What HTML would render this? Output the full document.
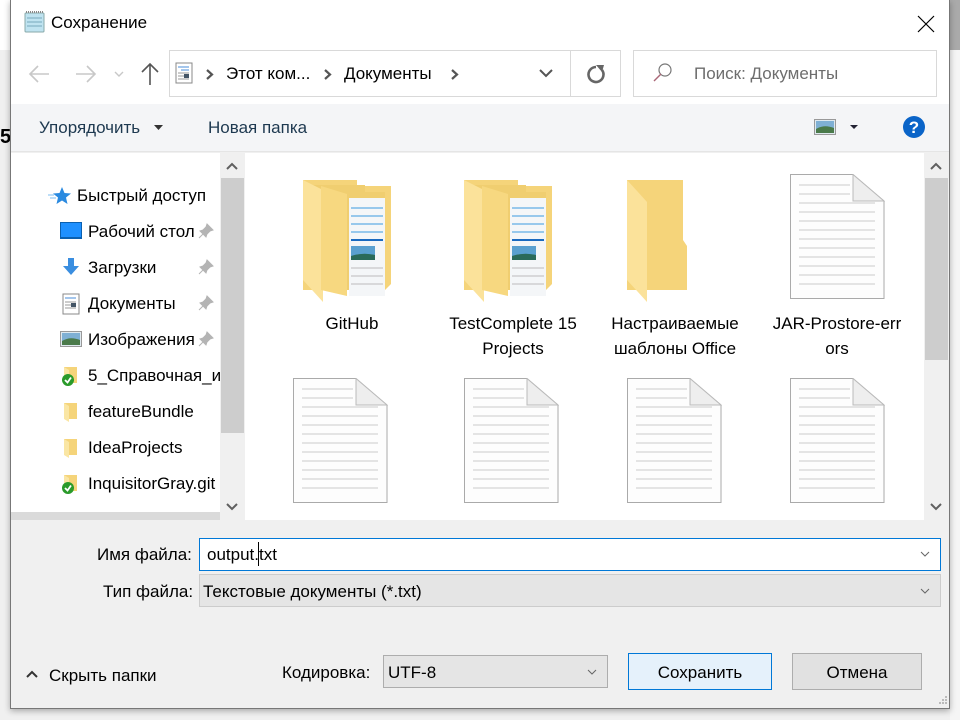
<!DOCTYPE html>
<html><head><meta charset="utf-8"><style>
*{margin:0;padding:0;box-sizing:border-box}
body{width:960px;height:720px;overflow:hidden;background:#f0f0f0;font-family:"Segoe UI","Liberation Sans","DejaVu Sans",sans-serif;font-size:17px;color:#000;position:relative}
.a{position:absolute}
.t{position:absolute;white-space:nowrap}
</style></head><body>
<div class="a" style="left:0;top:0;width:10px;height:720px;background:#f0f0f0"></div>
<div class="a" style="left:0;top:0;width:10px;height:50px;background:#fff"></div>
<div class="a" style="left:950px;top:0;width:10px;height:50px;background:#aaa"></div>
<div class="a" style="left:950px;top:50px;width:10px;height:670px;background:#f5f5f5"></div>
<div class="t" style="left:0;top:126px;font-size:20px;font-weight:bold">5</div>
<div class="a" style="left:10px;top:0;width:940px;height:709px;background:#f0f0f0;border:1px solid #777;border-top:none;box-shadow:0 2px 6px rgba(0,0,0,.3)"></div>
<div class="a" style="left:11px;top:0;width:938px;height:104px;background:#fff"></div>
<svg class="a" style="left:22px;top:10px" width="24" height="24" viewBox="0 0 24 24"><rect x="3" y="3" width="19" height="19" rx="1" fill="#bfe3f0" stroke="#8aa" /><g stroke="#7ab" stroke-width="1"><line x1="5" y1="8" x2="20" y2="8"/><line x1="5" y1="12" x2="20" y2="12"/><line x1="5" y1="16" x2="20" y2="16"/></g><line x1="4" y1="2" x2="21" y2="2" stroke="#888" stroke-width="2" stroke-dasharray="1 1"/></svg>
<div class="t" style="left:51px;top:13px;font-size:17px">Сохранение</div>
<svg class="a" style="left:916px;top:14px" width="20" height="20"><path d="M2 2L18 18M18 2L2 18" stroke="#000" stroke-width="1.2"/></svg>
<svg class="a" style="left:28px;top:64px" width="24" height="20"><path d="M2 10H21M10 2L2 10L10 18" stroke="#c8c8c8" stroke-width="1.6" fill="none"/></svg>
<svg class="a" style="left:74px;top:64px" width="24" height="20"><path d="M2 10H21M13 2L21 10L13 18" stroke="#c8c8c8" stroke-width="1.6" fill="none"/></svg>
<svg class="a" style="left:114px;top:70px" width="10" height="8"><path d="M1 2L5 6L9 2" stroke="#c8c8c8" stroke-width="1.4" fill="none"/></svg>
<svg class="a" style="left:140px;top:62px" width="20" height="24"><path d="M10 23V2M2 10L10 2L18 10" stroke="#555" stroke-width="1.6" fill="none"/></svg>
<div class="a" style="left:169px;top:50px;width:452px;height:47px;border:1px solid #d9d9d9;background:#fff"></div>
<div class="a" style="left:570px;top:51px;width:1px;height:45px;background:#d9d9d9"></div>
<svg class="a" style="left:175px;top:62px" width="18" height="22"><rect x="1" y="1" width="16" height="20" fill="#fff" stroke="#888"/><g stroke="#4a8ed8"><line x1="3" y1="5" x2="14" y2="5"/><line x1="6" y1="8" x2="14" y2="8"/></g><g stroke="#999"><line x1="3" y1="11" x2="14" y2="11"/><line x1="3" y1="14" x2="14" y2="14"/><line x1="3" y1="17" x2="14" y2="17"/></g><rect x="9" y="12" width="5" height="4" fill="#456"/></svg>
<svg class="a" style="left:206px;top:69px" width="8" height="11"><path d="M1 1L6 5.5L1 10" stroke="#555" stroke-width="2.2" fill="none"/></svg>
<div class="t" style="left:226px;top:64px">Этот ком...</div>
<svg class="a" style="left:324px;top:69px" width="8" height="11"><path d="M1 1L6 5.5L1 10" stroke="#555" stroke-width="2.2" fill="none"/></svg>
<div class="t" style="left:344px;top:64px">Документы</div>
<svg class="a" style="left:451px;top:69px" width="8" height="11"><path d="M1 1L6 5.5L1 10" stroke="#555" stroke-width="2.2" fill="none"/></svg>
<svg class="a" style="left:538px;top:68px" width="16" height="10"><path d="M2 2L8 8L14 2" stroke="#555" stroke-width="2" fill="none"/></svg>
<svg class="a" style="left:585px;top:63px" width="22" height="22"><g transform="translate(22,0) scale(-1,1)"><path d="M5 7A7.5 7.5 0 1 0 11 4" stroke="#666" stroke-width="2.6" fill="none"/><path d="M3 2L11 2L5 9Z" fill="#666"/></g></svg>
<div class="a" style="left:633px;top:50px;width:304px;height:47px;border:1px solid #d9d9d9;background:#fff"></div>
<svg class="a" style="left:652px;top:62px" width="22" height="22"><circle cx="13" cy="8" r="6" stroke="#777" stroke-width="1.2" fill="none"/><path d="M9 12L2 19" stroke="#a67" stroke-width="1.4"/></svg>
<div class="t" style="left:694px;top:64px;color:#6d6d6d">Поиск: Документы</div>
<div class="a" style="left:11px;top:104px;width:938px;height:48px;background:#f4f5f7;border-bottom:1px solid #e5e5e5"></div>
<div class="t" style="left:39px;top:118px;color:#1e3950">Упорядочить</div>
<svg class="a" style="left:154px;top:125px" width="10" height="6"><path d="M0 0H9L4.5 5Z" fill="#333"/></svg>
<div class="t" style="left:208px;top:118px;color:#1e3950">Новая папка</div>
<svg class="a" style="left:814px;top:119px" width="22" height="16"><rect x=".5" y=".5" width="21" height="15" fill="#dfe9ef" stroke="#999"/><rect x="2" y="2" width="18" height="12" fill="#7fb0d4"/><path d="M2 10Q10 5 20 9V14H2Z" fill="#4a7a4a"/></svg>
<svg class="a" style="left:850px;top:125px" width="9" height="5"><path d="M0 0H8L4 4Z" fill="#223"/></svg>
<svg class="a" style="left:902px;top:115px" width="24" height="24"><circle cx="12" cy="12" r="11" fill="#0a64c8"/><text x="12" y="18" text-anchor="middle" font-family="Liberation Sans" font-weight="bold" font-size="17" fill="#fff">?</text></svg>
<div class="a" style="left:11px;top:153px;width:209px;height:359px;background:#fff"></div>
<div class="a" style="left:11px;top:512px;width:209px;height:8px;background:#dadada"></div>
<div class="a" style="left:220px;top:153px;width:25px;height:367px;background:#f0f0f0"></div>
<div class="a" style="left:221px;top:178px;width:23px;height:255px;background:#cdcdcd"></div>
<svg class="a" style="left:225px;top:162px" width="14" height="9"><path d="M2 7L7 2L12 7" stroke="#606060" stroke-width="2" fill="none"/></svg>
<svg class="a" style="left:225px;top:502px" width="14" height="9"><path d="M2 2L7 7L12 2" stroke="#606060" stroke-width="2" fill="none"/></svg>
<div class="a" style="left:245px;top:153px;width:3px;height:367px;background:#fff"></div>
<svg class="a" style="left:48px;top:186px" width="24" height="20"><path d="M14 1L16.5 7L23 7.5L18 11.5L19.5 18L14 14.5L8.5 18L10 11.5L5 7.5L11.5 7Z" fill="#2a8ae0"/><g stroke="#7bbcf0"><line x1="0" y1="9" x2="6" y2="9"/><line x1="2" y1="12" x2="8" y2="12"/></g></svg>
<div class="t" style="left:77px;top:186px">Быстрый доступ</div>
<svg class="a" style="left:60px;top:222px" width="22" height="18"><rect x=".5" y=".5" width="21" height="16" fill="#1e90ff" stroke="#0a60b0"/><rect x="0" y="15" width="22" height="2" fill="#0a60b0"/></svg>
<div class="t" style="left:88px;top:222px;width:107px;overflow:hidden">Рабочий стол</div>
<svg class="a" style="left:62px;top:257px" width="18" height="20"><path d="M6 1H12V9H17L9 18L1 9H6Z" fill="#3a8ee0"/></svg>
<div class="t" style="left:88px;top:258px">Загрузки</div>
<svg class="a" style="left:62px;top:293px" width="18" height="22"><rect x="1" y="1" width="16" height="20" fill="#fff" stroke="#888"/><g stroke="#4a8ed8"><line x1="3" y1="5" x2="14" y2="5"/></g><g stroke="#999"><line x1="3" y1="9" x2="14" y2="9"/><line x1="3" y1="12" x2="14" y2="12"/><line x1="3" y1="15" x2="14" y2="15"/></g><rect x="9" y="10" width="5" height="4" fill="#456"/></svg>
<div class="t" style="left:88px;top:294px">Документы</div>
<svg class="a" style="left:60px;top:331px" width="22" height="16"><rect x=".5" y=".5" width="21" height="15" fill="#dfe9ef" stroke="#999"/><rect x="2" y="2" width="18" height="12" fill="#7fb0d4"/><path d="M2 10Q10 5 20 9V14H2Z" fill="#4a7a4a"/></svg>
<div class="t" style="left:88px;top:330px;width:107px;overflow:hidden">Изображения</div>
<svg class="a" style="left:198px;top:223px" width="16" height="16"><path d="M9 1L15 7L12 8L9 11L8 14L2 8L5 7L8 4Z M5 11L1 15" fill="#b4b4b4" stroke="#b4b4b4"/></svg>
<svg class="a" style="left:198px;top:259px" width="16" height="16"><path d="M9 1L15 7L12 8L9 11L8 14L2 8L5 7L8 4Z M5 11L1 15" fill="#b4b4b4" stroke="#b4b4b4"/></svg>
<svg class="a" style="left:198px;top:295px" width="16" height="16"><path d="M9 1L15 7L12 8L9 11L8 14L2 8L5 7L8 4Z M5 11L1 15" fill="#b4b4b4" stroke="#b4b4b4"/></svg>
<svg class="a" style="left:198px;top:331px" width="16" height="16"><path d="M9 1L15 7L12 8L9 11L8 14L2 8L5 7L8 4Z M5 11L1 15" fill="#b4b4b4" stroke="#b4b4b4"/></svg>
<svg class="a" style="left:60px;top:365px" width="20" height="22"><path d="M4 2H17V18H4Z" fill="#f5d47a"/><path d="M4 2L9 5V21L4 18Z" fill="#fae6a4"/><circle cx="8" cy="15" r="6" fill="#2a9a2a"/><path d="M5 15L7.5 17.5L11 12.5" stroke="#fff" stroke-width="1.8" fill="none"/></svg>
<div class="t" style="left:88px;top:366px;width:132px;overflow:hidden">5_Справочная_и</div>
<svg class="a" style="left:60px;top:401px" width="20" height="22"><path d="M4 2H17V18H4Z" fill="#f5d47a"/><path d="M4 2L9 5V21L4 18Z" fill="#fae6a4"/></svg>
<div class="t" style="left:88px;top:402px">featureBundle</div>
<svg class="a" style="left:60px;top:437px" width="20" height="22"><path d="M4 2H17V18H4Z" fill="#f5d47a"/><path d="M4 2L9 5V21L4 18Z" fill="#fae6a4"/></svg>
<div class="t" style="left:88px;top:438px">IdeaProjects</div>
<svg class="a" style="left:60px;top:473px" width="20" height="22"><path d="M4 2H17V18H4Z" fill="#f5d47a"/><path d="M4 2L9 5V21L4 18Z" fill="#fae6a4"/><circle cx="8" cy="15" r="6" fill="#2a9a2a"/><path d="M5 15L7.5 17.5L11 12.5" stroke="#fff" stroke-width="1.8" fill="none"/></svg>
<div class="t" style="left:88px;top:474px;width:132px;overflow:hidden">InquisitorGray.git</div>
<div class="a" style="left:248px;top:153px;width:676px;height:367px;background:#fff"></div>
<div class="a" style="left:924px;top:153px;width:25px;height:367px;background:#f0f0f0"></div>
<div class="a" style="left:925px;top:178px;width:23px;height:182px;background:#cdcdcd"></div>
<svg class="a" style="left:929px;top:162px" width="14" height="9"><path d="M2 7L7 2L12 7" stroke="#606060" stroke-width="2" fill="none"/></svg>
<svg class="a" style="left:929px;top:502px" width="14" height="9"><path d="M2 2L7 7L12 2" stroke="#606060" stroke-width="2" fill="none"/></svg>
<svg class="a" style="left:303px;top:180px" width="88" height="122"><path d="M0 0H54V6H88V104L82 110H0Z" fill="#f5d47a"/><path d="M10 5H62V12H82V110H10Z" fill="#f0ce70"/><rect x="46" y="18" width="36" height="98" fill="#f4f6f8"/><g stroke="#3a9ae0"><line x1="48" y1="28" x2="80" y2="28"/><line x1="48" y1="36" x2="80" y2="36"/><line x1="48" y1="44" x2="80" y2="44"/><line x1="48" y1="52" x2="80" y2="52"/></g><line x1="48" y1="60" x2="80" y2="60" stroke="#1a6ac0" stroke-width="2"/><rect x="48" y="66" width="24" height="14" fill="#5aa0d0"/><path d="M48 76Q60 72 72 75V80H48Z" fill="#2a6a5a"/><g stroke="#bbb"><line x1="48" y1="88" x2="80" y2="88"/><line x1="48" y1="96" x2="80" y2="96"/><line x1="48" y1="104" x2="80" y2="104"/></g><path d="M0 0L20 10V122L0 100Z" fill="#fbe29a"/><path d="M18 6L44 14V116L18 110Z" fill="#f7d880"/></svg>
<svg class="a" style="left:464px;top:180px" width="88" height="122"><path d="M0 0H54V6H88V104L82 110H0Z" fill="#f5d47a"/><path d="M10 5H62V12H82V110H10Z" fill="#f0ce70"/><rect x="46" y="18" width="36" height="98" fill="#f4f6f8"/><g stroke="#3a9ae0"><line x1="48" y1="28" x2="80" y2="28"/><line x1="48" y1="36" x2="80" y2="36"/><line x1="48" y1="44" x2="80" y2="44"/><line x1="48" y1="52" x2="80" y2="52"/></g><line x1="48" y1="60" x2="80" y2="60" stroke="#1a6ac0" stroke-width="2"/><rect x="48" y="66" width="24" height="14" fill="#5aa0d0"/><path d="M48 76Q60 72 72 75V80H48Z" fill="#2a6a5a"/><g stroke="#bbb"><line x1="48" y1="88" x2="80" y2="88"/><line x1="48" y1="96" x2="80" y2="96"/><line x1="48" y1="104" x2="80" y2="104"/></g><path d="M0 0L20 10V122L0 100Z" fill="#fbe29a"/><path d="M18 6L44 14V116L18 110Z" fill="#f7d880"/></svg>
<svg class="a" style="left:627px;top:180px" width="80" height="122"><path d="M0 0H56V60L60 66V110H0Z" fill="#f5d47a"/><path d="M0 0L20 22V122L0 100Z" fill="#fbe29a"/></svg>
<div class="t" style="left:272px;top:311px;width:160px;text-align:center;line-height:25px">GitHub</div>
<div class="t" style="left:433px;top:311px;width:160px;text-align:center;line-height:25px">TestComplete 15<br>Projects</div>
<div class="t" style="left:595px;top:311px;width:160px;text-align:center;line-height:25px">Настраиваемые<br>шаблоны Office</div>
<div class="t" style="left:757px;top:311px;width:160px;text-align:center;line-height:25px">JAR-Prostore-err<br>ors</div>
<svg width="0" height="0" style="position:absolute"><defs><g id="d"><path d="M.5 .5H63L94 27V124.5H.5Z" fill="#fdfdfd" stroke="#aaa"/><path d="M63 .5V27H94Z" fill="#eee" stroke="#bbb"/><g stroke="#ccc"><line x1="9" y1="11" x2="60" y2="11"/><line x1="9" y1="20" x2="60" y2="20"/><line x1="9" y1="29" x2="85" y2="29"/><line x1="9" y1="38" x2="85" y2="38"/><line x1="9" y1="47" x2="85" y2="47"/><line x1="9" y1="56" x2="85" y2="56"/><line x1="9" y1="65" x2="85" y2="65"/><line x1="9" y1="74" x2="85" y2="74"/><line x1="9" y1="83" x2="85" y2="83"/><line x1="9" y1="92" x2="85" y2="92"/><line x1="9" y1="101" x2="85" y2="101"/><line x1="9" y1="110" x2="85" y2="110"/></g></g></defs></svg>
<svg class="a" style="left:790px;top:174px" width="95" height="126"><use href="#d"/></svg>
<svg class="a" style="left:293px;top:378px" width="95" height="126"><use href="#d"/></svg>
<svg class="a" style="left:464px;top:378px" width="95" height="126"><use href="#d"/></svg>
<svg class="a" style="left:627px;top:378px" width="95" height="126"><use href="#d"/></svg>
<svg class="a" style="left:790px;top:378px" width="95" height="126"><use href="#d"/></svg>
<div class="t" style="left:97px;top:545px">Имя файла:</div>
<div class="a" style="left:199px;top:538px;width:742px;height:33px;background:#fff;border:1px solid #0078d7"></div>
<div class="t" style="left:207px;top:545px">output.txt</div>
<div class="a" style="left:258px;top:542px;width:1px;height:24px;background:#000"></div>
<svg class="a" style="left:920px;top:551px" width="10" height="7"><path d="M1 1L5 5L9 1" stroke="#666" fill="none"/></svg>
<div class="t" style="left:103px;top:582px">Тип файла:</div>
<div class="a" style="left:199px;top:574px;width:742px;height:33px;background:#e5e5e5;border:1px solid #ccc"></div>
<div class="t" style="left:203px;top:582px">Текстовые документы (*.txt)</div>
<svg class="a" style="left:920px;top:588px" width="10" height="7"><path d="M1 1L5 5L9 1" stroke="#666" fill="none"/></svg>
<svg class="a" style="left:26px;top:670px" width="12" height="9"><path d="M1 7L6 2L11 7" stroke="#333" stroke-width="2" fill="none"/></svg>
<div class="t" style="left:49px;top:666px">Скрыть папки</div>
<div class="t" style="left:282px;top:663px">Кодировка:</div>
<div class="a" style="left:383px;top:655px;width:225px;height:33px;background:#e5e5e5;border:1px solid #adadad"></div>
<div class="t" style="left:388px;top:663px">UTF-8</div>
<svg class="a" style="left:587px;top:669px" width="10" height="7"><path d="M1 1L5 5L9 1" stroke="#666" fill="none"/></svg>
<div class="a" style="left:628px;top:653px;width:144px;height:37px;background:#e5f1fb;border:1px solid #0078d7"></div>
<div class="t" style="left:628px;top:663px;width:144px;text-align:center">Сохранить</div>
<div class="a" style="left:792px;top:653px;width:130px;height:37px;background:#e1e1e1;border:1px solid #adadad"></div>
<div class="t" style="left:792px;top:663px;width:130px;text-align:center">Отмена</div>
<svg class="a" style="left:938px;top:695px" width="10" height="10"><g fill="#bbb"><rect x="7" y="1" width="2" height="2"/><rect x="4" y="4" width="2" height="2"/><rect x="7" y="4" width="2" height="2"/><rect x="1" y="7" width="2" height="2"/><rect x="4" y="7" width="2" height="2"/><rect x="7" y="7" width="2" height="2"/></g></svg>
</body></html>
